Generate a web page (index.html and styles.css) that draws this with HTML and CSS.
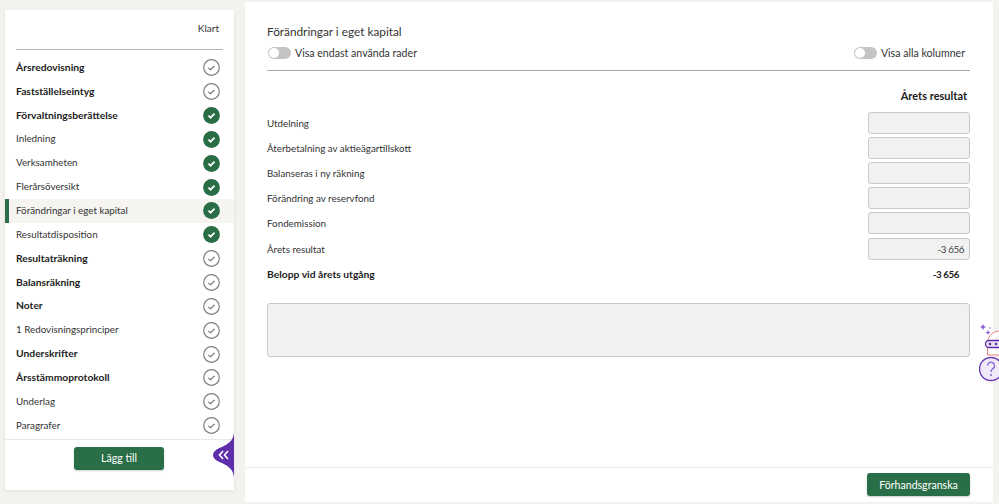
FILE: index.html
```html
<!DOCTYPE html>
<html lang="sv">

<head>
  <meta charset="UTF-8">
  <meta name="viewport" content="width=device-width, initial-scale=1.0">
  <title>Förändringar i eget kapital</title>
  <link rel="stylesheet" href="styles.css">
</head>

<body>
  <svg class="defs" width="0" height="0">
    <symbol id="todo" viewBox="0 0 17 17">
      <circle cx="8.5" cy="8.5" r="7.8" fill="#fff" stroke="#808080" stroke-width="1.2"/>
      <path d="M5.4 8.8l2.100 2 4-4" fill="none" stroke="#666" stroke-width="1.100"/>
    </symbol>
    <symbol id="done" viewBox="0 0 17 17">
      <circle cx="8.5" cy="8.5" r="8.4" fill="#2a6e48"/>
      <path d="M5.5 8.7l2.100 2 3.900-4" fill="none" stroke="#fff" stroke-width="1.700"/>
    </symbol>
  </svg>

  <aside class="sidebar">
    <div class="klart">Klart</div>
    <ul class="menu">
      <li class="bold">Årsredovisning<svg class="check"><use href="#todo"/></svg></li>
      <li class="bold">Fastställelseintyg<svg class="check"><use href="#todo"/></svg></li>
      <li class="bold">Förvaltningsberättelse<svg class="check"><use href="#done"/></svg></li>
      <li>Inledning<svg class="check"><use href="#done"/></svg></li>
      <li>Verksamheten<svg class="check"><use href="#done"/></svg></li>
      <li>Flerårsöversikt<svg class="check"><use href="#done"/></svg></li>
      <li class="active">Förändringar i eget kapital<svg class="check"><use href="#done"/></svg></li>
      <li>Resultatdisposition<svg class="check"><use href="#done"/></svg></li>
      <li class="bold">Resultaträkning<svg class="check"><use href="#todo"/></svg></li>
      <li class="bold">Balansräkning<svg class="check"><use href="#todo"/></svg></li>
      <li class="bold">Noter<svg class="check"><use href="#todo"/></svg></li>
      <li>1 Redovisningsprinciper<svg class="check"><use href="#todo"/></svg></li>
      <li class="bold">Underskrifter<svg class="check"><use href="#todo"/></svg></li>
      <li class="bold">Årsstämmoprotokoll<svg class="check"><use href="#todo"/></svg></li>
      <li>Underlag<svg class="check"><use href="#todo"/></svg></li>
      <li>Paragrafer<svg class="check"><use href="#todo"/></svg></li>
    </ul>
    <div class="side-foot">
      <button class="btn add">Lägg till</button>
    </div>
    <div class="collapse">
      <svg viewBox="0 0 21 44">
        <path d="M21 0C20 8 15 11 9 14 3 16 0 19 0 22s3 6 9 8c6 3 11 6 12 14z" fill="#5f2eab"/>
        <path d="M10 18l-3.500 4 3.500 4M15 18l-3.500 4 3.500 4" fill="none" stroke="#fff" stroke-width="1.600"/>
      </svg>
    </div>
  </aside>

  <main class="panel">
    <div class="content">
      <h1 class="title">Förändringar i eget kapital</h1>
      <div class="toggles">
        <label class="toggle"><span class="switch"></span>Visa endast använda rader</label>
        <label class="toggle"><span class="switch"></span>Visa alla kolumner</label>
      </div>
      <div class="col-head">Årets resultat</div>
      <div class="row"><span>Utdelning</span><div class="field"></div></div>
      <div class="row"><span>Återbetalning av aktieägartillskott</span><div class="field"></div></div>
      <div class="row"><span>Balanseras i ny räkning</span><div class="field"></div></div>
      <div class="row"><span>Förändring av reservfond</span><div class="field"></div></div>
      <div class="row"><span>Fondemission</span><div class="field"></div></div>
      <div class="row"><span>Årets resultat</span><div class="field">-3 656</div></div>
      <div class="row total"><span>Belopp vid årets utgång</span><div class="sum">-3 656</div></div>
      <div class="notes"></div>
    </div>
    <div class="panel-foot">
      <button class="btn preview">Förhandsgranska</button>
    </div>
  </main>

  <svg class="helper" width="24" height="58" viewBox="0 0 24 58">
    <g fill="#8a63d2">
      <path d="M4 0l1 2 2 1-2 1-1 2-1-2-2-1 2-1z"/>
      <path d="M9 6l.8 1.700 1.700.8-1.700.8L9 11l-.8-1.700-1.700-.8 1.700-.8z"/>
      <circle cx="11" cy="4" r=".8"/>
    </g>
    <path d="M9 20v-4a11 11 0 0 1 15-8M8.500 20v11H24" fill="#fff" stroke="#ee7f7f" stroke-width="1"/>
    <rect x="6.500" y="16.500" width="24" height="7" rx="3.500" fill="#e9e1f8" stroke="#5f2eab" stroke-width="1.300"/>
    <circle cx="11" cy="20" r="1.300" fill="#5f2eab"/>
    <circle cx="17" cy="20" r="1.300" fill="#5f2eab"/>
    <circle cx="12" cy="45" r="11.500" fill="#efe9fa" stroke="#6a3bb8" stroke-width="1.400"/>
    <path d="M8.500 41.500a3.500 3.500 0 1 1 5.500 3c-1.300 1-2 1.500-2 3.500" fill="none" stroke="#8a63d2" stroke-width="1.300"/>
    <circle cx="12" cy="51" r="1" fill="#8a63d2"/>
  </svg>
</body>

</html>
```

FILE: styles.css
```css
html,
body {
  margin: 0;
  height: 504px;
  overflow: hidden;
}

body {
  display: flex;
  align-items: flex-start;
  background-color: #f3f2ee;
  color: #222;
  font-family: Lato, sans-serif;
  font-size: 9.8px;
}

.defs {
  position: absolute;
}

.sidebar {
  position: relative;
  width: 229px;
  height: 480px;
  margin: 10px 11px 0 5px;
  background-color: #fff;
  box-shadow: 0 1px 4px rgba(0, 0, 0, 0.08);
  display: flex;
  flex-direction: column;
  flex-shrink: 0;
}

.klart {
  height: 40px;
  margin: 0 11px;
  padding: 12px 4px 0 0;
  box-sizing: border-box;
  text-align: right;
  border-bottom: 1px solid #b5b5b5;
  font-size: 10px;
  color: #333;
}

.menu {
  list-style: none;
  margin: 6px 0 0;
  padding: 0;
}

.menu li {
  display: flex;
  align-items: center;
  justify-content: space-between;
  height: 23.85px;
  box-sizing: border-box;
  padding: 0 14px 2px 11px;
  color: #333;
}

.menu .bold {
  font-size: 10.3px;
  font-weight: 700;
  color: #1c1c1c;
}

.menu .active {
  background-color: #f5f4f0;
  border-left: 4px solid #2a6e48;
  padding-left: 7px;
}

.check {
  width: 17px;
  height: 17px;
  margin-bottom: -2px;
}

.side-foot {
  border-top: 1px solid #e8e8e8;
  margin-top: 1px;
  padding-top: 7px;
  text-align: center;
}

.btn {
  height: 23px;
  padding: 0;
  border: 0;
  border-radius: 3px;
  background-color: #2a6e48;
  color: #fff;
  font-family: Lato, sans-serif;
  font-size: 10.6px;
  box-shadow: 0 1px 2px rgba(0, 0, 0, 0.2);
}

.add {
  width: 90px;
  margin-left: -1px;
}

.preview {
  width: 103px;
}

.collapse {
  position: absolute;
  right: 0;
  top: 423px;
  width: 21px;
  height: 44px;
}

.collapse svg {
  display: block;
  width: 21px;
  height: 44px;
}

.panel {
  width: 748px;
  height: 500px;
  margin-top: 2px;
  background-color: #fff;
  display: flex;
  flex-direction: column;
}

.content {
  flex: 1;
  padding: 22px 23px 0 22px;
}

.title {
  margin: 0;
  font-size: 11.8px;
  font-weight: 400;
  line-height: 16px;
  color: #333;
}

.toggles {
  display: flex;
  justify-content: space-between;
  height: 31px;
  padding: 6px 5px 0 1px;
  box-sizing: border-box;
  border-bottom: 1px solid #a8a8a8;
}

.toggle {
  display: flex;
  align-items: center;
  gap: 4px;
  height: 14px;
  font-size: 10.6px;
  color: #333;
}

.switch {
  position: relative;
  width: 23px;
  height: 12px;
  border-radius: 6px;
  background-color: #c4c4c4;
}

.switch::before {
  content: "";
  position: absolute;
  left: 1px;
  top: 1px;
  width: 10px;
  height: 10px;
  border-radius: 50%;
  background-color: #fff;
}

.col-head {
  margin-top: 17px;
  height: 15px;
  line-height: 15px;
  padding-right: 3px;
  text-align: right;
  font-size: 11px;
  font-weight: 700;
  color: #1c1c1c;
}

.row {
  display: flex;
  align-items: center;
  justify-content: space-between;
  height: 25.2px;
  color: #333;
}

.row:nth-child(4) {
  margin-top: 7px;
}

.field {
  width: 102px;
  height: 22px;
  box-sizing: border-box;
  padding-right: 5px;
  border: 1px solid #c9c9c9;
  border-radius: 3px;
  background-color: #f1f1f1;
  text-align: right;
  line-height: 20px;
  letter-spacing: -0.4px;
  color: #444;
}

.total {
  font-size: 10.3px;
  font-weight: 700;
  color: #1c1c1c;
}

.sum {
  padding-right: 11px;
  font-size: 9.8px;
  letter-spacing: -0.4px;
}

.notes {
  margin-top: 17px;
  height: 54px;
  box-sizing: border-box;
  border: 1px solid #c9c9c9;
  border-radius: 3px;
  background-color: #f1f1f1;
}

.panel-foot {
  height: 35px;
  box-sizing: border-box;
  padding: 5px 23px 0 0;
  text-align: right;
  border-top: 1px solid #e8e8e8;
}

.helper {
  position: absolute;
  left: 979px;
  top: 324px;
}
```
